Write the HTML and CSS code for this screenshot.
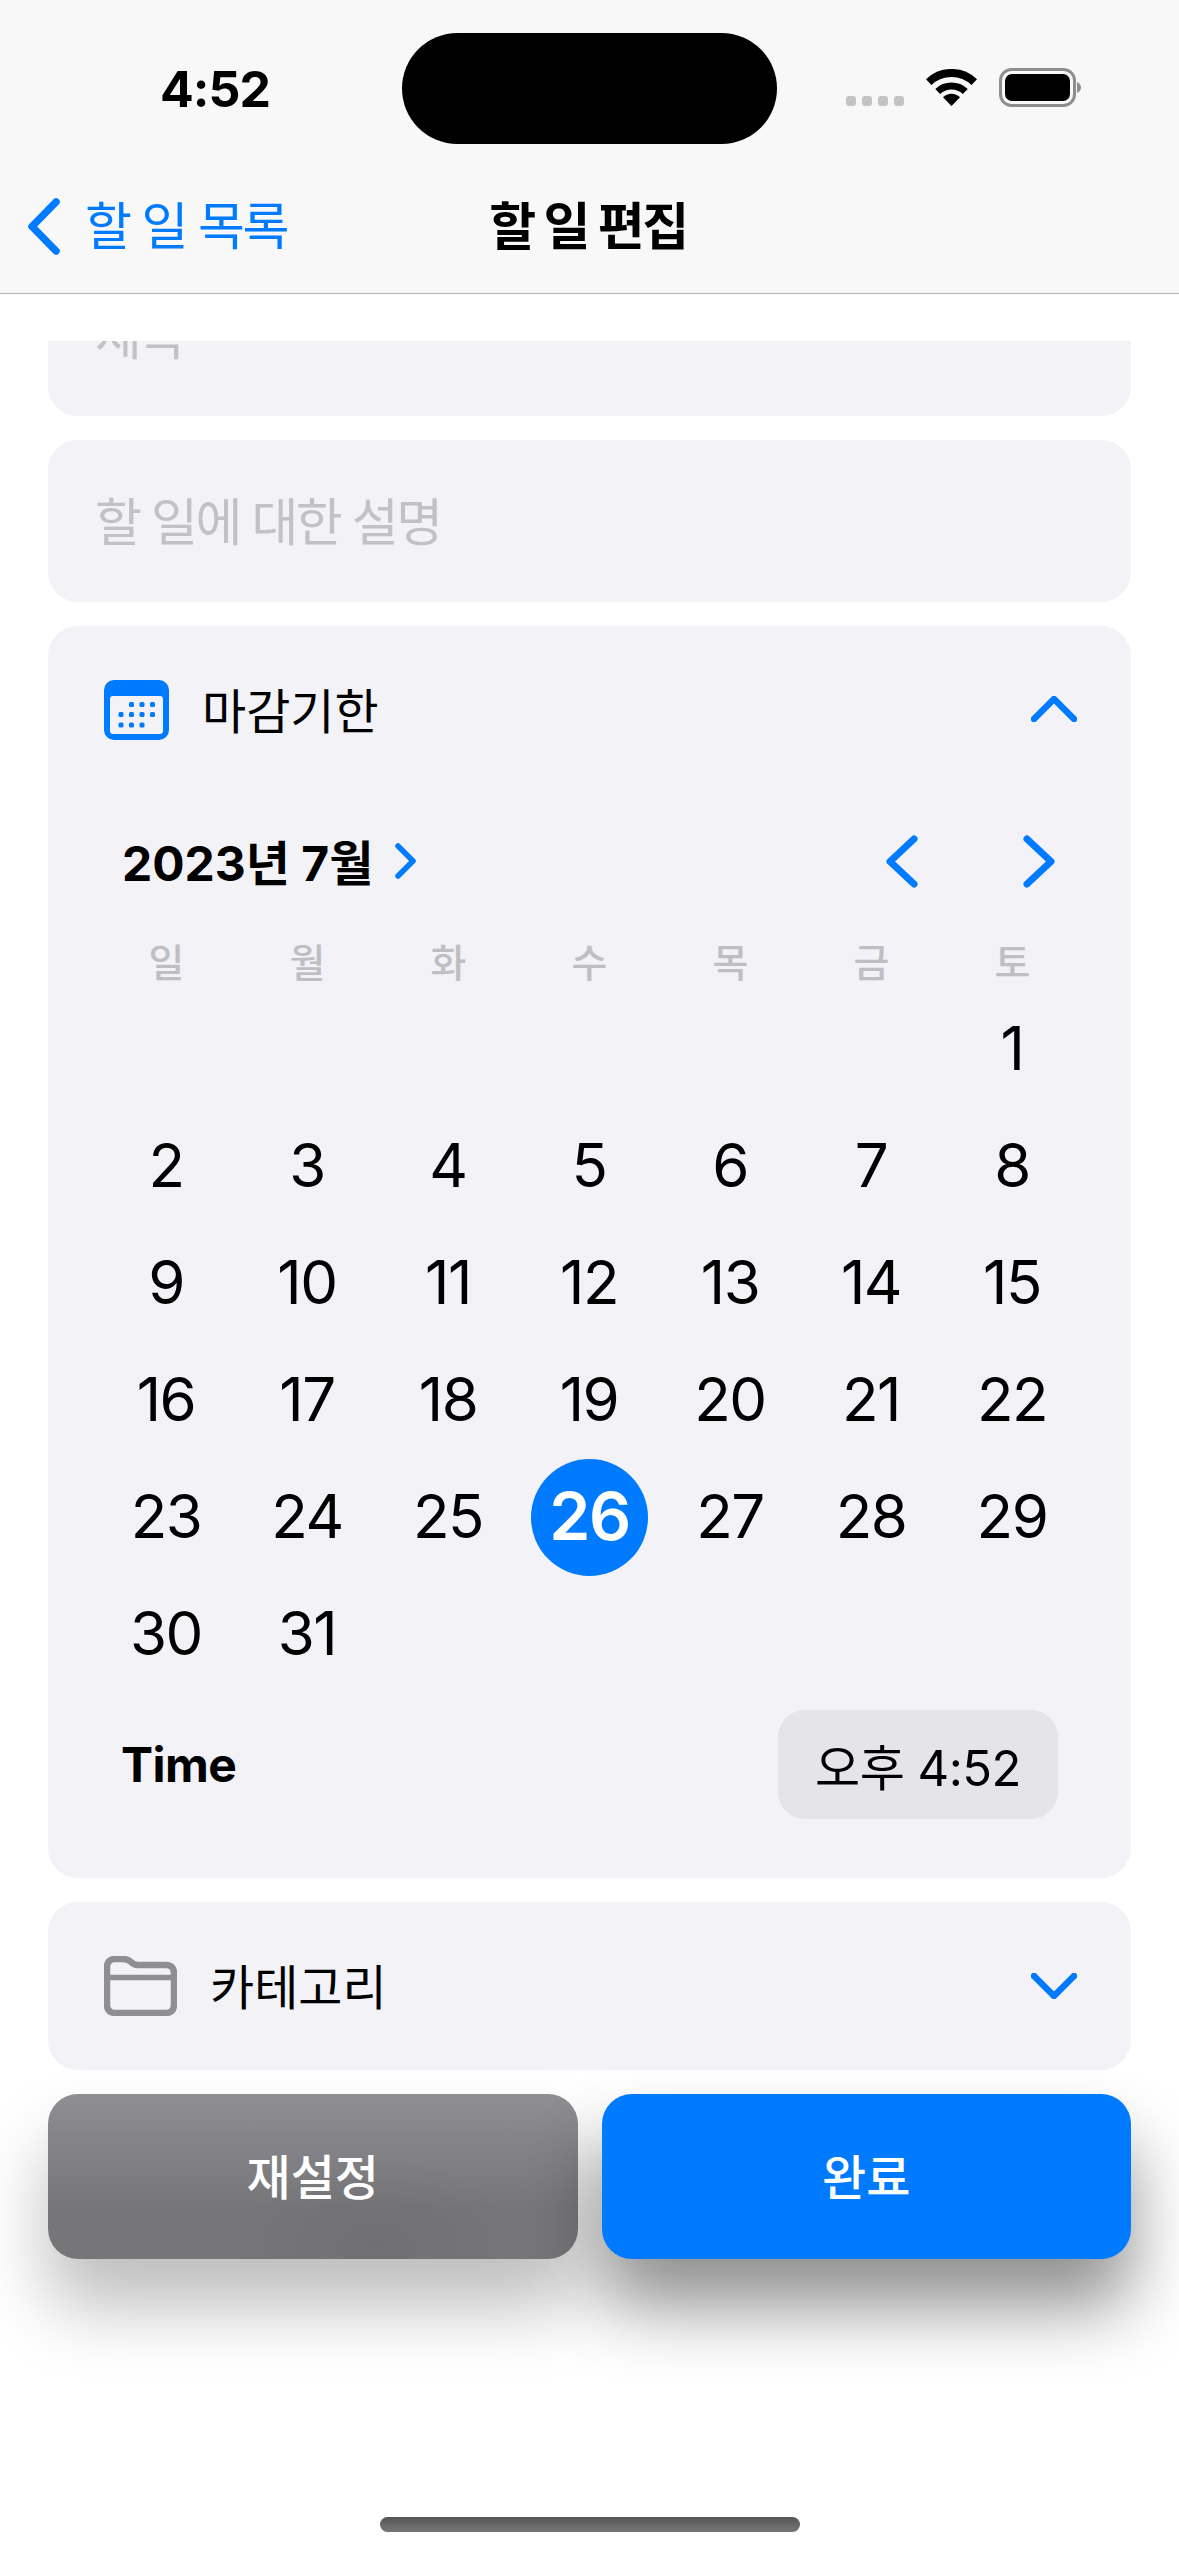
FILE: index.html
```html
<!DOCTYPE html>
<html lang="ko">
<head>
    <meta charset="UTF-8">
    <meta name="viewport" content="width=device-width, initial-scale=1.0">
    <title>할 일 편집</title>
    <link rel="stylesheet" href="styles.css">
</head>
<body>
<div class="screen">

    <header class="topbar">
        <div class="status">
            <div class="status-time">4:52</div>
            <div class="island"></div>
            <div class="status-icons">
                <div class="signal"><span></span><span></span><span></span><span></span></div>
                <svg class="wifi" viewBox="0 0 51 37">
                    <path d="M2.7 13.1A33 33 0 0 1 48.3 13.1" fill="none" stroke="#000" stroke-width="8"/>
                    <path d="M11.7 22.5A20 20 0 0 1 39.3 22.5" fill="none" stroke="#000" stroke-width="7"/>
                    <path d="M25.5 37L17 28.3A12 12 0 0 1 34 28.3Z" fill="#000"/>
                </svg>
                <svg class="battery" viewBox="0 0 82 39">
                    <rect x="1.5" y="1.5" width="74" height="36" rx="11" fill="none" stroke="#8e8e8e" stroke-width="3"/>
                    <rect x="6" y="6" width="65" height="27" rx="7" fill="#000"/>
                    <path d="M78 14C80.500 15 82 17 82 19.500C82 22 80.500 24 78 25Z" fill="#8e8e8e"/>
                </svg>
            </div>
        </div>
        <nav class="navbar">
            <a class="back">
                <svg class="back-icon" viewBox="0 0 33 57"><polyline points="29,4 5,28.500 29,53" fill="none" stroke="#007aff" stroke-width="7.500" stroke-linecap="round" stroke-linejoin="round"/></svg>
                <span>할 일 목록</span>
            </a>
            <div class="nav-title">할 일 편집</div>
        </nav>
    </header>

    <main class="content">
        <div class="form-clip">
            <div class="card field field-title">제목</div>
            <div class="card field">할 일에 대한 설명</div>

            <section class="card">
                <div class="disclosure">
                    <svg class="calendar-icon" viewBox="0 0 65 60">
                        <rect width="65" height="60" rx="10" fill="#007aff"/>
                        <rect x="6" y="16" width="53" height="38" rx="3" fill="#f2f2f7"/>
                        <g fill="#007aff">
                            <rect x="25" y="22" width="5" height="5" rx="1.500"/>
                            <rect x="35.500" y="22" width="5" height="5" rx="1.500"/>
                            <rect x="46" y="22" width="5" height="5" rx="1.500"/>
                            <rect x="14.500" y="32" width="5" height="5" rx="1.500"/>
                            <rect x="25" y="32" width="5" height="5" rx="1.500"/>
                            <rect x="35.500" y="32" width="5" height="5" rx="1.500"/>
                            <rect x="46" y="32" width="5" height="5" rx="1.500"/>
                            <rect x="14.500" y="42.500" width="5" height="5" rx="1.500"/>
                            <rect x="25" y="42.500" width="5" height="5" rx="1.500"/>
                            <rect x="35.500" y="42.500" width="5" height="5" rx="1.500"/>
                        </g>
                    </svg>
                    <span class="disclosure-label">마감기한</span>
                    <svg class="toggle" viewBox="0 0 46 26"><polyline points="3,23 23,3 43,23" fill="none" stroke="#007aff" stroke-width="6.500" stroke-linecap="round" stroke-linejoin="round"/></svg>
                </div>

                <div class="picker">
                    <div class="month-row">
                        <div class="month-label">
                            <span>2023년 7월</span>
                            <svg class="month-more" viewBox="0 0 21 36"><polyline points="3,3 18,18 3,33" fill="none" stroke="#007aff" stroke-width="5.500" stroke-linecap="round" stroke-linejoin="round"/></svg>
                        </div>
                        <div class="month-nav">
                            <svg class="month-arrow" viewBox="0 0 32 53"><polyline points="28,4 4,26.500 28,49" fill="none" stroke="#007aff" stroke-width="7" stroke-linecap="round" stroke-linejoin="round"/></svg>
                            <svg class="month-arrow" viewBox="0 0 32 53"><polyline points="4,4 28,26.500 4,49" fill="none" stroke="#007aff" stroke-width="7" stroke-linecap="round" stroke-linejoin="round"/></svg>
                        </div>
                    </div>

                    <div class="weekdays">
                        <span>일</span><span>월</span><span>화</span><span>수</span><span>목</span><span>금</span><span>토</span>
                    </div>

                    <div class="days">
                        <span></span><span></span><span></span><span></span><span></span><span></span><span>1</span>
                        <span>2</span><span>3</span><span>4</span><span>5</span><span>6</span><span>7</span><span>8</span>
                        <span>9</span><span>10</span><span>11</span><span>12</span><span>13</span><span>14</span><span>15</span>
                        <span>16</span><span>17</span><span>18</span><span>19</span><span>20</span><span>21</span><span>22</span>
                        <span>23</span><span>24</span><span>25</span><span class="selected">26</span><span>27</span><span>28</span><span>29</span>
                        <span>30</span><span>31</span>
                    </div>

                    <div class="time-row">
                        <span class="time-label">Time</span>
                        <span class="time-pill">오후 4:52</span>
                    </div>
                </div>
            </section>

            <div class="card disclosure disclosure-category">
                <svg class="folder-icon" viewBox="0 0 73 60">
                    <path d="M3 11C3 6 6 3 11 3H19C23 3 25 4 27 6C29 8 31 9 34 9H62C67 9 70 12 70 17V49C70 54 67 57 62 57H11C6 57 3 54 3 49Z" fill="none" stroke="#8e8e93" stroke-width="6.500"/>
                    <path d="M3 21.500H70" stroke="#8e8e93" stroke-width="5.500"/>
                </svg>
                <span class="disclosure-label">카테고리</span>
                <svg class="toggle" viewBox="0 0 46 26"><polyline points="3,3 23,23 43,3" fill="none" stroke="#007aff" stroke-width="6.500" stroke-linecap="round" stroke-linejoin="round"/></svg>
            </div>

            <div class="actions">
                <button class="btn btn-reset">재설정</button>
                <button class="btn btn-done">완료</button>
            </div>
        </div>
    </main>

    <div class="home-indicator"></div>
</div>
</body>
</html>
```

FILE: styles.css
```css
* {
    box-sizing: border-box;
}
html, body {
    margin: 0;
    background: #fff;
}
body {
    font-family: Inter, "Noto Sans CJK KR", sans-serif;
    color: #000;
}
.screen {
    width: 1179px;
    height: 2556px;
    display: flex;
    flex-direction: column;
    overflow: hidden;
    background: #fff;
}

/* top bar */
.topbar {
    height: 294px;
    background: #f8f8f8;
    border-bottom: 1px solid #b4b4b4;
}
.status {
    display: grid;
    grid-template-columns: 402px 375px 1fr;
    height: 144px;
    padding-top: 33px;
    align-items: center;
}
.status-time {
    padding-left: 160px;
    font-size: 50px;
    font-weight: 700;
    letter-spacing: -1px;
}
.island {
    height: 111px;
    border-radius: 56px;
    background: #000;
}
.status-icons {
    display: flex;
    align-items: flex-end;
    gap: 22px;
    height: 39px;
    padding-left: 69px;
    margin-top: -3px;
}
.signal {
    display: flex;
    gap: 6px;
    margin-bottom: 1px;
}
.signal span {
    width: 10px;
    height: 10px;
    border-radius: 3px;
    background: #c4c4c4;
}
.wifi {
    width: 51px;
    height: 37px;
    margin-bottom: 1px;
}
.battery {
    width: 82px;
    height: 39px;
}
.navbar {
    display: grid;
    grid-template-columns: 1fr auto 1fr;
    align-items: center;
    height: 134px;
    margin-top: 12px;
}
.back {
    display: flex;
    align-items: center;
    gap: 25px;
    padding-left: 27px;
    font-size: 51px;
    letter-spacing: -2.4px;
    color: #007aff;
}
.back-icon {
    width: 33px;
    height: 57px;
    margin-top: 6px;
}
.nav-title {
    margin-left: -3px;
    font-size: 51px;
    font-weight: 700;
    letter-spacing: -2.4px;
}

/* form */
.content {
    padding-top: 47px;
}
.form-clip {
    height: 2170px;
    overflow: hidden;
    padding: 0 48px;
    display: flex;
    flex-direction: column;
    gap: 24px;
}
.card {
    flex: none;
    background: #f2f2f7;
    border-radius: 30px;
}
.field {
    display: flex;
    align-items: center;
    height: 162px;
    padding: 0 47px 5px;
    font-size: 51px;
    letter-spacing: -2.6px;
    color: #c2c2c5;
}
.field-title {
    margin-top: -87px;
}
.disclosure {
    display: flex;
    align-items: center;
    height: 166px;
    padding: 0 54px 0 56px;
}
.disclosure-category {
    height: 168px;
}
.disclosure-label {
    margin-left: 33px;
    margin-top: -3px;
    font-size: 48px;
}
.disclosure-category .disclosure-label {
    margin-top: -5px;
}
.toggle {
    width: 46px;
    height: 26px;
    margin-left: auto;
}
.calendar-icon {
    width: 65px;
    height: 60px;
    margin-top: 1px;
}
.folder-icon {
    width: 73px;
    height: 60px;
}

/* date picker */
.picker {
    padding: 18px 48px 59px;
}
.month-row {
    display: flex;
    align-items: center;
    justify-content: space-between;
    height: 102px;
    padding-left: 26px;
}
.month-label {
    display: flex;
    align-items: center;
    gap: 22px;
    font-size: 48px;
    font-weight: 700;
}
.month-label span {
    margin-top: -3px;
}
.month-more {
    width: 21px;
    height: 36px;
}
.month-nav {
    display: flex;
    gap: 105px;
    padding-right: 28px;
}
.month-arrow {
    width: 32px;
    height: 53px;
}
.weekdays, .days {
    display: grid;
    grid-template-columns: repeat(7, 141px);
    text-align: center;
}
.weekdays {
    height: 58px;
    margin-top: 19px;
    margin-bottom: 2px;
    align-items: center;
    font-size: 39px;
    font-weight: 500;
    color: #bfbfc3;
}
.days {
    grid-auto-rows: 117px;
    align-items: center;
    justify-items: center;
    font-size: 60px;
    letter-spacing: -1.5px;
}
.days span {
    margin: -3px 1px 0 0;
}
.days .selected {
    width: 117px;
    height: 117px;
    margin: 0;
    line-height: 114px;
    border-radius: 50%;
    background: #007aff;
    color: #fff;
    font-weight: 600;
    font-size: 66px;
}
.time-row {
    display: flex;
    align-items: center;
    justify-content: space-between;
    margin-top: 17px;
    padding: 0 25px 0 25px;
}
.time-label {
    font-size: 48px;
    font-weight: 700;
    letter-spacing: -.5px;
}
.time-pill {
    display: flex;
    align-items: center;
    justify-content: center;
    width: 280px;
    height: 109px;
    border-radius: 27px;
    background: #e4e4e9;
    font-size: 49px;
    letter-spacing: -.5px;
}

/* buttons */
.actions {
    flex: none;
    display: grid;
    grid-template-columns: 1fr 1fr;
    gap: 24px;
}
.btn {
    height: 165px;
    padding: 0 0 6px;
    border: 0;
    border-radius: 30px;
    font-family: inherit;
    font-size: 48px;
    font-weight: 500;
    color: #fff;
}
.btn-reset {
    background: radial-gradient(ellipse 150px 90px at 62% 92%, rgba(0, 0, 0, .05), transparent), linear-gradient(#8e8e93, #767679 70%);
    box-shadow: 0 48px 70px rgba(0, 0, 0, .26);
}
.btn-done {
    background: #007aff;
    box-shadow: 0 48px 70px rgba(0, 0, 0, .44);
}

.home-indicator {
    flex: none;
    width: 420px;
    height: 15px;
    margin: auto auto 24px;
    border-radius: 8px;
    background: linear-gradient(#555, #777);
}
```
